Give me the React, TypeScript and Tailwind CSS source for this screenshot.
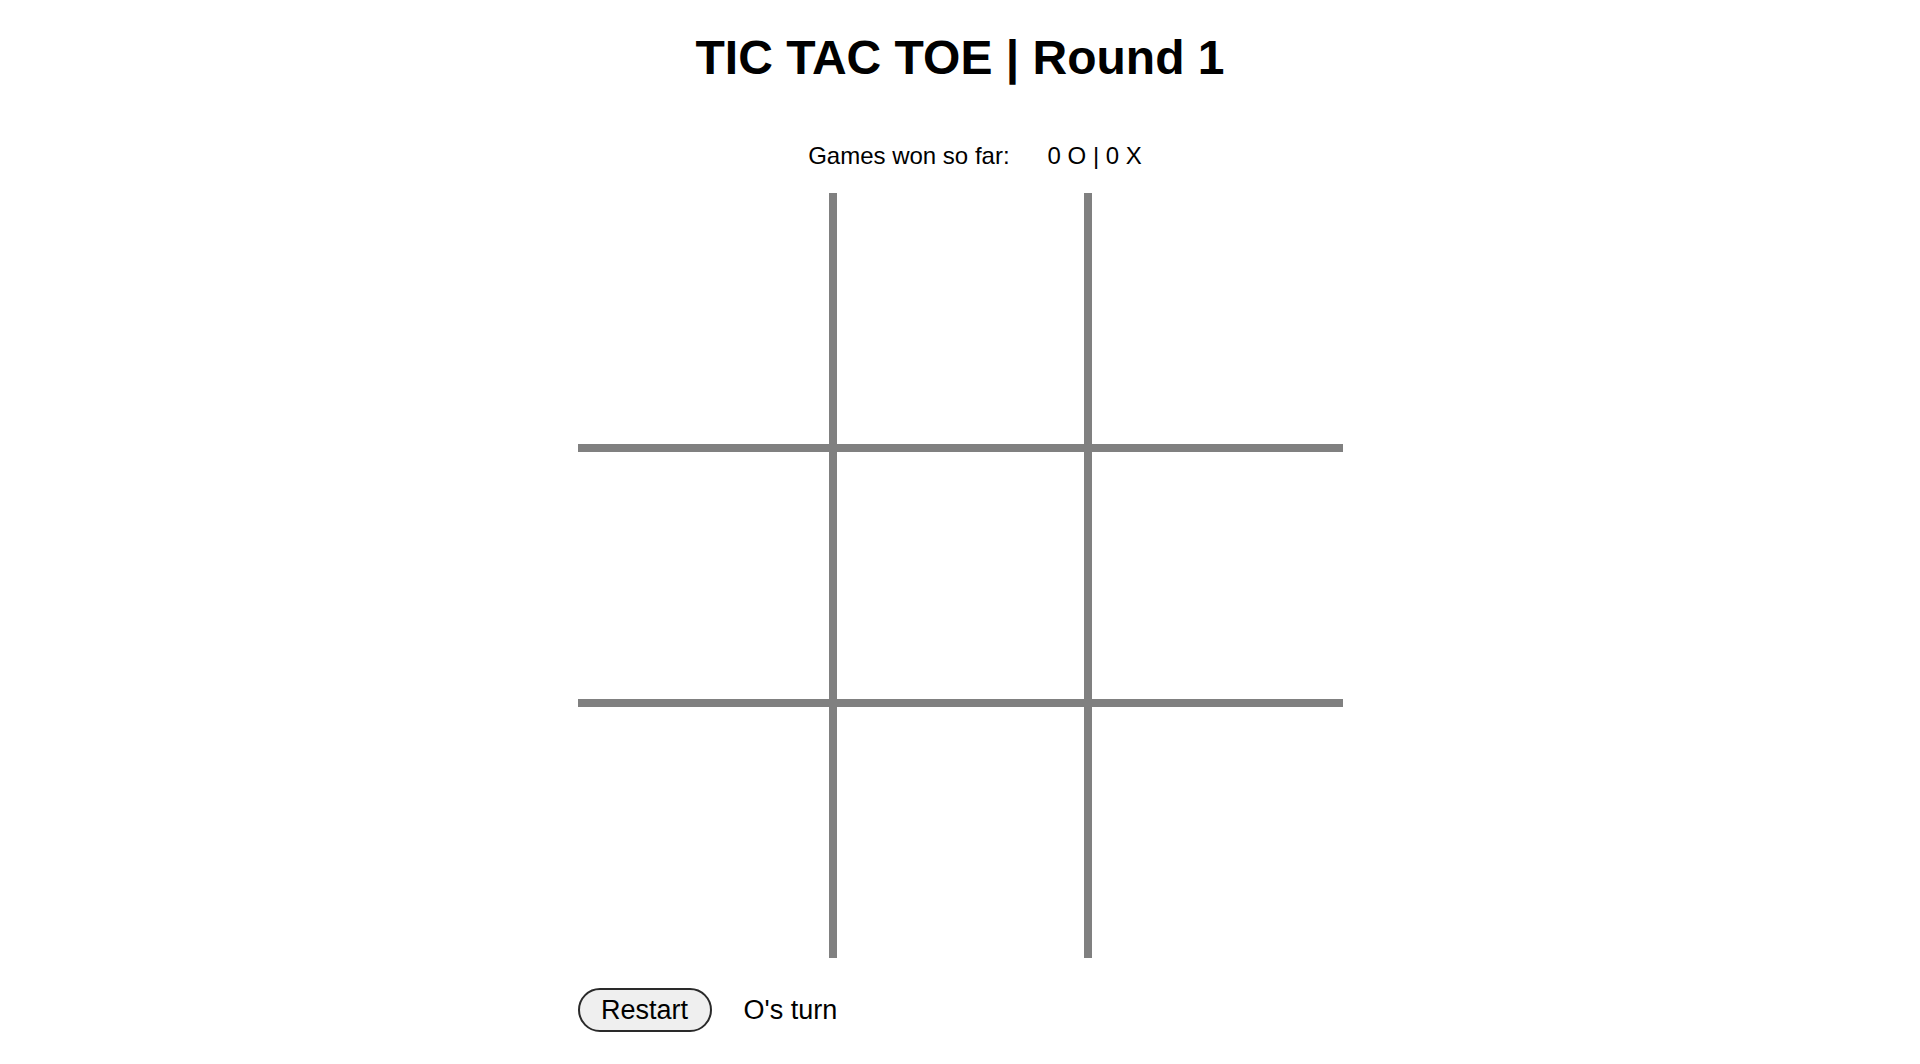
import React, { useState } from 'react';

const Cell = ({ i, value, onClick }: { i: number; value: string; onClick: () => void }) => {
  const row = Math.floor(i / 3);
  const col = i % 3;
  const borders = [
    col > 0 ? 'border-l-4' : '',
    col < 2 ? 'border-r-4' : '',
    row > 0 ? 'border-t-4' : '',
    row < 2 ? 'border-b-4' : '',
  ].join(' ');
  return (
    <div
      onClick={onClick}
      className={`w-[255px] h-[255px] border-[#808080] flex items-center justify-center text-[120px] ${borders}`}
    >
      {value}
    </div>
  );
};

export default function App() {
  const [cells, setCells] = useState<string[]>(Array(9).fill(''));
  const [turn, setTurn] = useState('O');

  const play = (i: number) => {
    if (cells[i]) return;
    const next = [...cells];
    next[i] = turn;
    setCells(next);
    setTurn(turn === 'O' ? 'X' : 'O');
  };

  return (
    <div className="min-h-screen bg-white text-black font-['Liberation_Sans',Arial,sans-serif] flex flex-col items-center">
      <h1 className="text-[48px] font-bold leading-none mt-[34px]">TIC TAC TOE | Round 1</h1>
      <div className="flex gap-[38px] text-[24px] leading-none mt-[62px] ml-[30px]">
        <span>Games won so far:</span>
        <span>0 O | 0 X</span>
      </div>
      <div className="grid grid-cols-3 mt-[25px]">
        {cells.map((v, i) => (
          <Cell key={i} i={i} value={v} onClick={() => play(i)} />
        ))}
      </div>
      <div className="w-[765px] flex items-center gap-[32px] mt-[30px]">
        <button
          onClick={() => {
            setCells(Array(9).fill(''));
            setTurn('O');
          }}
          className="w-[134px] h-[44px] rounded-full border-2 border-[#2a2a2a] bg-[#efefef] text-[27px] leading-none"
        >
          Restart
        </button>
        <span className="text-[27px] leading-none">{turn}'s turn</span>
      </div>
    </div>
  );
}
